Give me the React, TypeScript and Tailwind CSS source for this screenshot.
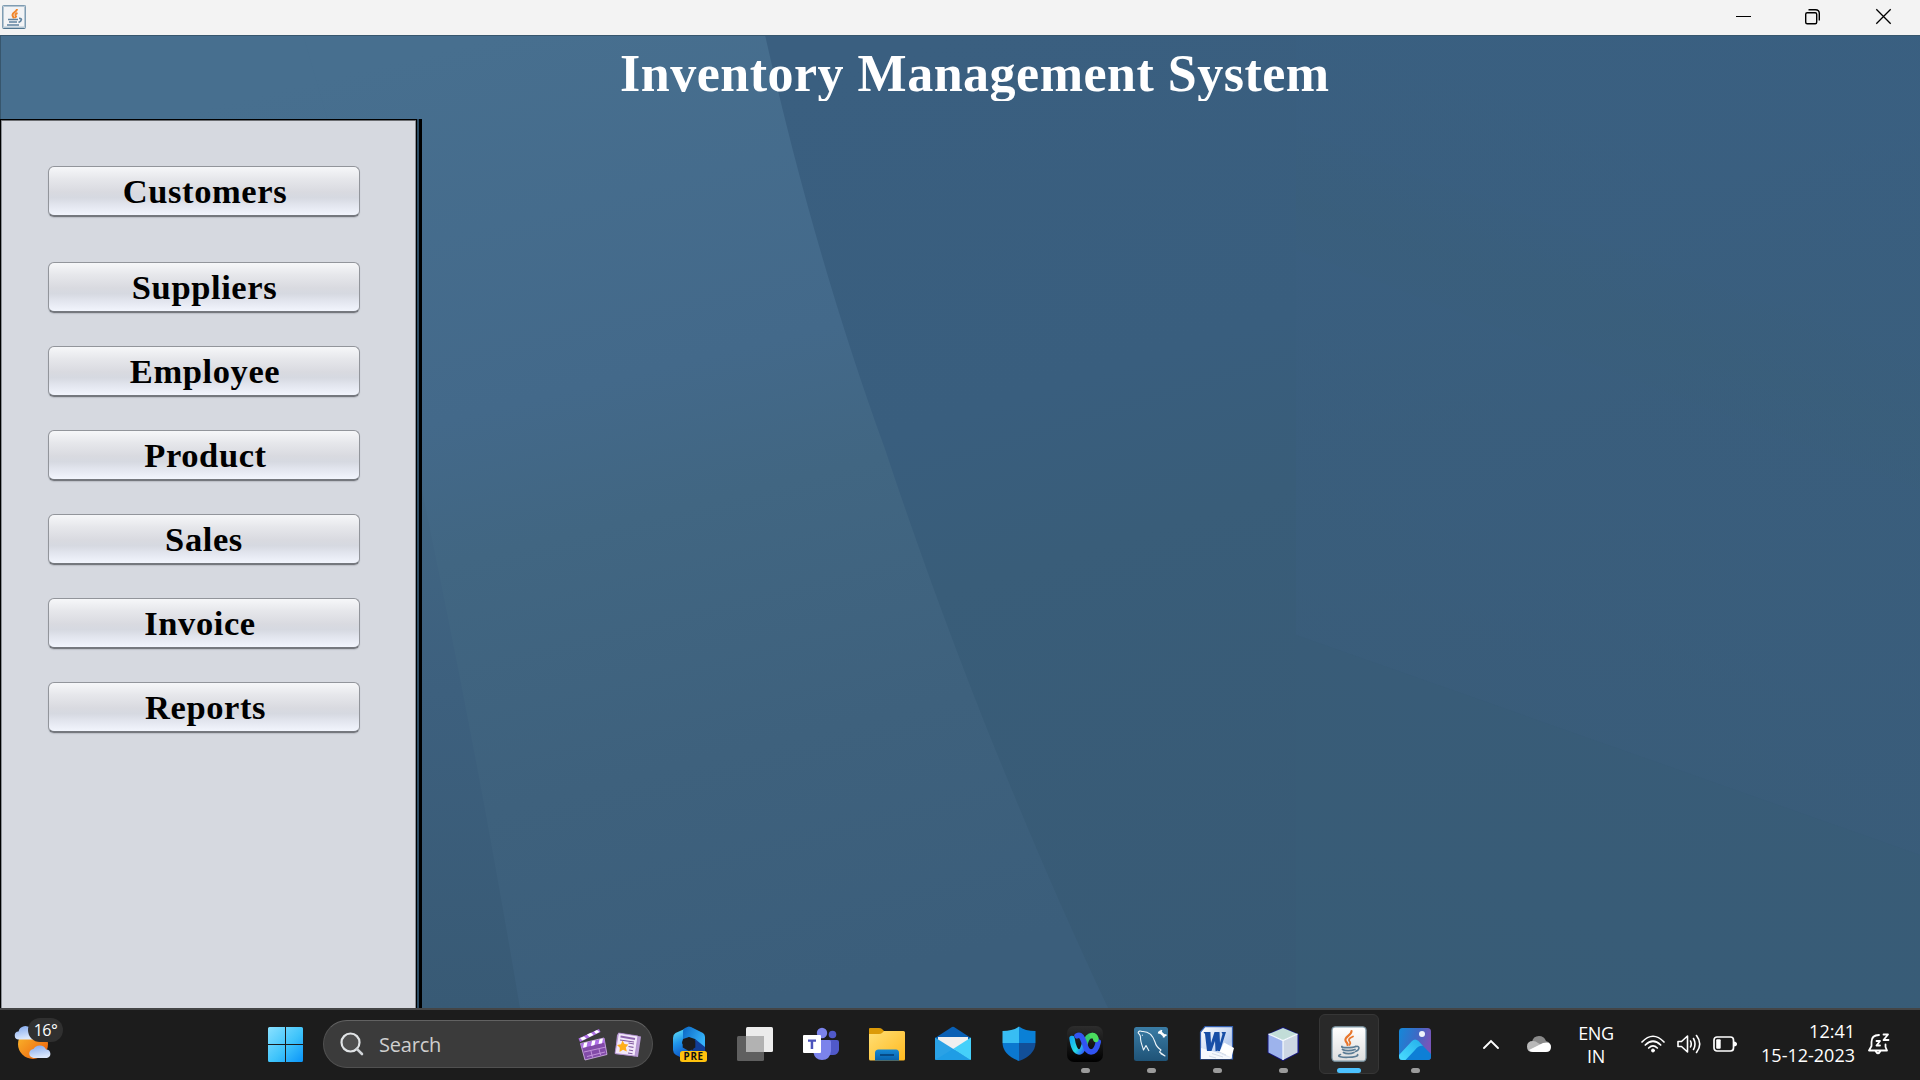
import React from "react";

const menu = [
  { label: "Customers", cls: "mb-[45px]", text: "pl-[2px]" },
  { label: "Suppliers", cls: "mb-[33px]", text: "pl-[1px]" },
  { label: "Employee", cls: "mb-[33px]", text: "pl-[2px]" },
  { label: "Product", cls: "mb-[33px]", text: "pl-[3px]" },
  { label: "Sales", cls: "mb-[33px]", text: "" },
  { label: "Invoice", cls: "mb-[33px]", text: "pr-[8px]" },
  { label: "Reports", cls: "", text: "pl-[3px]" },
];

function Backdrop() {
  return (
    <svg className="absolute inset-0 h-full w-full" viewBox="0 35 1920 973" preserveAspectRatio="none">
      <defs>
        <linearGradient id="dark" gradientUnits="userSpaceOnUse" x1="950" y1="35" x2="1250" y2="1008">
          <stop offset="0" stopColor="#3a5f80" />
          <stop offset="0.36" stopColor="#395e7e" />
          <stop offset="0.52" stopColor="#395d79" />
          <stop offset="1" stopColor="#385a75" />
        </linearGradient>
        <linearGradient id="light" gradientUnits="userSpaceOnUse" x1="500" y1="35" x2="740" y2="1008">
          <stop offset="0" stopColor="#476f8f" />
          <stop offset="0.36" stopColor="#43698a" />
          <stop offset="0.5" stopColor="#416682" />
          <stop offset="0.75" stopColor="#3e617d" />
          <stop offset="1" stopColor="#3b5e7b" />
        </linearGradient>
        <linearGradient id="corner" x1="0" y1="0" x2="0" y2="1">
          <stop offset="0" stopColor="#416683" />
          <stop offset="0.4" stopColor="#3d607e" />
          <stop offset="1" stopColor="#385a75" />
        </linearGradient>
        <linearGradient id="right" gradientUnits="userSpaceOnUse" x1="1740" y1="35" x2="1400" y2="1008">
          <stop offset="0" stopColor="#3a6082" />
          <stop offset="0.55" stopColor="#3a5e7e" />
          <stop offset="0.75" stopColor="#3a5d7b" />
          <stop offset="1" stopColor="#395d78" />
        </linearGradient>
        <linearGradient id="band" gradientUnits="userSpaceOnUse" x1="1620" y1="230" x2="1560" y2="390">
          <stop offset="0" stopColor="#3a5f7a" stopOpacity="0" />
          <stop offset="0.5" stopColor="#3a5f7a" />
          <stop offset="1" stopColor="#3a5f7a" stopOpacity="0" />
        </linearGradient>
      </defs>
      <rect y="35" width="1920" height="973" fill="url(#dark)" />
      <path d="M1296 35H1920V1008H1296Z" fill="url(#right)" opacity="0.65" />
      <path d="M1296 130L1920 360V490L1296 250Z" fill="url(#band)" opacity="0.5" />
      <path d="M1296 635L1920 855V1008H1296Z" fill="#385b75" opacity="0.5" />
      <path d="M0 35H765C800 190 840 325 885 449C935 600 1010 800 1108 1008H0Z" fill="url(#light)" />
      <path d="M420 480C436 560 475 740 520 1008H400V480Z" fill="url(#corner)" />
      <path d="M0 35H303L327 119H0Z" fill="#4a7192" opacity="0.15" />
      <path d="M0 35.5H1920M0.5 35V119" stroke="#37566d" fill="none" />
    </svg>
  );
}

function JavaCup({ size }: { size: string }) {
  return (
    <svg className={size} viewBox="0 0 36 36">
      <defs>
        <linearGradient id="cupbg" x1="0" y1="0" x2="0" y2="1">
          <stop offset="0" stopColor="#ffffff" />
          <stop offset="1" stopColor="#dedede" />
        </linearGradient>
      </defs>
      <rect x="1" y="0.8" width="34" height="34.4" rx="3.5" fill="url(#cupbg)" stroke="#7f99a8" strokeWidth="1.3" />
      <g fill="none" strokeLinecap="round">
        <path d="M20.5 5C21 9 13.500 10.500 14.500 14.500C15 16.500 17 17 16.500 19" stroke="#e8762c" strokeWidth="2.2" />
        <path d="M22 10.500C17.500 12.500 17 14 19 16C19.800 17 19.200 18 18.500 18.800" stroke="#e8762c" strokeWidth="1.8" />
        <path d="M11 20.500C9 22 22 22 24.500 20.500M11.500 23.500C14 25 20 25 24 23.500M12.500 26.500C15 28 20 28 23 26.500" stroke="#5b7c95" strokeWidth="1.7" />
        <path d="M25 20.500C29 19.500 29 24 24.500 25.500" stroke="#5b7c95" strokeWidth="1.6" />
        <path d="M9.500 28.500C4 30.500 12 31.500 17 31.300C23 31.200 28 30 26.500 28.500" stroke="#5b7c95" strokeWidth="1.6" />
      </g>
    </svg>
  );
}

function TitleBar() {
  return (
    <header className="flex h-[35px] shrink-0 items-start justify-between bg-[#f3f3f3]">
      <div className="ml-[2px] mt-[5px] h-6 w-6 overflow-hidden rounded-[2px] border border-[#7f9cb2] border-b-[#4f7590]">
        <svg className="h-[22px] w-[22px]" viewBox="0 0 22 22">
          <rect width="22" height="22" fill="#b4c6d3" />
          <rect x="1" y="1" width="20" height="19.500" fill="#f2f3f5" />
          <path d="M14 3C14 6 9.500 6 9.500 9C9.500 10.500 11 11 10.500 12.500M14.500 7C12 8 12 9 13 10.500L12 12" fill="none" stroke="#f0862b" strokeWidth="2" />
          <path d="M5 13.500H15M6 16H14M4 19H16M16 12.500C19.500 12 19 15 15.500 16.500" fill="none" stroke="#5f83a0" strokeWidth="1.700" />
        </svg>
      </div>
      <svg className="mr-[28px] mt-2 h-[17px] w-[158px]" viewBox="0 0 158 17" fill="none" stroke="#000">
        <path d="M2 8.500H17" strokeWidth="1" />
        <rect x="71.700" y="4.700" width="11" height="11" rx="1.500" strokeWidth="1.400" />
        <path d="M74.500 1.700H81.500Q85.300 1.700 85.300 5.500V12.500" strokeWidth="1.400" />
        <path d="M142.300 1.300L156.700 15.700M156.700 1.300L142.300 15.700" strokeWidth="1.300" />
      </svg>
    </header>
  );
}

function Sidebar() {
  return (
    <div className="flex h-full w-[422px]">
      <nav className="flex h-full w-[417px] flex-col items-start border-x border-t border-black bg-[#d6d9e0] pl-[47px] pt-[46px] shadow-[inset_0_1px_0_#6c6e72,inset_-1px_0_0_#8b8f96,inset_1px_0_0_#8b8f96]">
        {menu.map((m) => (
          <button
            key={m.label}
            className={`${m.cls} flex h-[51px] w-[312px] shrink-0 items-center justify-center rounded-[6px] border border-b-2 border-[#92959b] border-b-[#75787e] bg-[linear-gradient(to_bottom,#f6f7f9_0%,#e6e7eb_25%,#d9dae0_52%,#d6d9e1_64%,#e3e6ef_80%,#f2f5fd_100%)] font-['Liberation_Serif',serif] text-[34.500px] font-bold leading-[46px] tracking-[0.6px] text-black shadow-[0_1px_1px_rgba(110,114,122,0.25)]`}
          >
            <span className={m.text}>{m.label}</span>
          </button>
        ))}
      </nav>
      <div className="w-[2px] bg-[#2c4c64]" />
      <div className="w-[3px] bg-black" />
    </div>
  );
}

const ic = "h-9 w-9";

function Copilot() {
  return (
    <svg className={ic} viewBox="0 0 36 36">
      <defs>
        <linearGradient id="cp1" x1="0" y1="0" x2="0.300" y2="1">
          <stop offset="0" stopColor="#6ff0fb" /><stop offset="0.5" stopColor="#2196ea" /><stop offset="1" stopColor="#0b4fc0" />
        </linearGradient>
        <linearGradient id="cp2" x1="0" y1="0" x2="1" y2="0.500">
          <stop offset="0" stopColor="#0a66c4" /><stop offset="1" stopColor="#35b4fb" />
        </linearGradient>
      </defs>
      <path d="M18 1L4.500 7Q2 8.500 2 12V24Q2 27 5 29L15 34L22 30V24L14 22L11 17L13 9Z" fill="url(#cp1)" />
      <path d="M12 13V5Q12 3 14 2L17 0.700Q18 0.300 20 1L32 7Q34 8.500 34 11V24L29 20L24 13L18 11Z" fill="url(#cp2)" />
      <path d="M24 13L34 21V26L20 33L13 31L22 24Z" fill="#123e96" />
      <path d="M18 11.500L24.300 15V21.500L18 25L11.700 21.500V15Z" fill="#1c1c1c" />
      <rect x="9" y="25" width="27" height="11" rx="2.500" fill="#ffc20e" />
      <text x="22.700" y="33.800" textAnchor="middle" fontFamily="Open Sans, sans-serif" fontWeight="700" fontSize="9.800" letterSpacing="0.700" fill="#111">PRE</text>
    </svg>
  );
}

function TaskView() {
  return (
    <svg className={ic} viewBox="0 0 36 36">
      <rect x="9" y="1" width="27" height="25" rx="1.500" fill="#ececec" />
      <rect x="0" y="10" width="27" height="25" rx="1.500" fill="#5f5f5f" />
      <path d="M9 10H27V26H9Z" fill="#b2b2b2" />
    </svg>
  );
}

function Teams() {
  return (
    <svg className={ic} viewBox="0 0 36 36">
      <circle cx="29.500" cy="8.500" r="3.800" fill="#5059c9" />
      <path d="M24 14H34Q36 14 36 16V24Q35 29 30 29H24Z" fill="#5059c9" />
      <circle cx="19" cy="7" r="5.200" fill="#7b83eb" />
      <path d="M10 14H26Q28 14 28 16V25Q27 34 19 34Q12 34 10.500 27Z" fill="#7b83eb" />
      <rect x="0" y="9" width="18" height="18" rx="1" fill="#fff" />
      <path d="M5 13.500H13V15.800H10.200V23H7.700V15.800H5Z" fill="#4b53bc" />
    </svg>
  );
}

function Folder() {
  return (
    <svg className={ic} viewBox="0 0 36 36">
      <defs>
        <linearGradient id="fo" x1="0" y1="0" x2="1" y2="1"><stop offset="0" stopColor="#ffdf75" /><stop offset="1" stopColor="#ffb91f" /></linearGradient>
        <linearGradient id="fb" x1="0" y1="0" x2="0" y2="1"><stop offset="0" stopColor="#1688d4" /><stop offset="1" stopColor="#0862ad" /></linearGradient>
      </defs>
      <path d="M0 9V3Q0 2 1 2H10Q12 2 13 3L16 6V10H0Z" fill="#dc9a08" />
      <path d="M0 8H10Q12 8 13 7L15 5H34.500Q36 5 36 6.500V33Q36 34.500 34.500 34.500H1.500Q0 34.500 0 33Z" fill="url(#fo)" />
      <path d="M6 34.500V27Q6 23.500 9.500 23.500H27Q30 23.500 30 27V34.500Z" fill="url(#fb)" />
      <path d="M11 29H25" stroke="#064a86" strokeWidth="2" />
    </svg>
  );
}

function Mail() {
  return (
    <svg className={ic} viewBox="0 0 36 36">
      <path d="M0 12L17 1Q18 0.400 19 1L36 12V20H0Z" fill="#0960b5" />
      <path d="M3 11H33V15L18 26L3 15Z" fill="#f0f0f0" />
      <path d="M0 11.500L36 34H1Q0 34 0 33Z" fill="#2aa2e6" />
      <path d="M36 11.500V33Q36 34 35 34L18 23Z" fill="#45d0fa" />
      <path d="M0 34L18 23L35.500 34Z" fill="#1f9de5" />
    </svg>
  );
}

function Shield() {
  return (
    <svg className={ic} viewBox="0 0 36 36">
      <path d="M18 0.500Q12 5 1.500 5V17H18Z" fill="#38bdf3" />
      <path d="M18 0.500Q24 5 34.500 5V17H18Z" fill="#0a80d6" />
      <path d="M1.500 17Q2 29 18 35V17Z" fill="#0b78d0" />
      <path d="M34.500 17Q34 29 18 35V17Z" fill="#124f98" />
    </svg>
  );
}

function Webex() {
  return (
    <svg className={ic} viewBox="0 0 36 36">
      <defs>
        <linearGradient id="wbg" x1="0" y1="0" x2="0" y2="1"><stop offset="0" stopColor="#2d2d2d" /><stop offset="1" stopColor="#000" /></linearGradient>
        <linearGradient id="w1" gradientUnits="userSpaceOnUse" x1="4" y1="10" x2="20" y2="20"><stop offset="0" stopColor="#12a6f3" /><stop offset="0.600" stopColor="#25dde5" /><stop offset="1" stopColor="#2d65f6" /></linearGradient>
      </defs>
      <rect width="36" height="36" rx="7" fill="url(#wbg)" />
      <g fill="none" strokeLinecap="round" strokeWidth="5.400">
        <path d="M5 12.500C6 20 8.500 26 12 26C15.500 26 16.500 21 18 16" stroke="url(#w1)" />
        <path d="M18 18C19.500 12 22 9.500 25 9.500C27.500 9.500 28.500 11 29 13" stroke="#34c96b" />
        <path d="M10 9.800C13.500 7.800 15.500 11 17.500 17.500C19 23 21 26 24 26C28.500 26 30.500 20 31.300 16" stroke="#3154f2" />
        <path d="M25 9.500C27 9 28.500 11 28.800 13.500" stroke="#4bdc5e" />
      </g>
    </svg>
  );
}

function MySql() {
  return (
    <svg className={ic} viewBox="0 0 36 36">
      <defs><linearGradient id="my" x1="0" y1="0" x2="0" y2="1"><stop offset="0" stopColor="#3a7ca5" /><stop offset="1" stopColor="#1f5377" /></linearGradient></defs>
      <rect x="1" y="1" width="34" height="34" rx="2.500" fill="url(#my)" />
      <path d="M5 7Q6 4 9 5.500C16 5 20 10 22 16C23 20 25 22 28 24L26.500 26L32 30L27.500 27.500M5 7Q8 9 7.500 13C8 18 9.500 20 10.500 24L13 19.500L16 25M9 9L9.800 9.500" fill="none" stroke="#eef5f9" strokeWidth="1.100" strokeLinejoin="round" />
      <path d="M27 6L31 9.500" stroke="#fff" strokeWidth="2.600" strokeLinecap="round" />
      <path d="M25 6.500L27.500 7L28.500 4M30.500 11.500L31 9.500L33.500 9" stroke="#fff" strokeWidth="1.800" fill="none" />
    </svg>
  );
}

function Word() {
  return (
    <svg className={ic} viewBox="0 0 36 36">
      <defs><linearGradient id="wd" x1="0" y1="0" x2="1" y2="1"><stop offset="0" stopColor="#fff" /><stop offset="0.700" stopColor="#b9cdef" /><stop offset="1" stopColor="#fff" /></linearGradient></defs>
      <path d="M6 0.700H33.500V33H1.500V6Z" fill="url(#wd)" stroke="#345fae" strokeWidth="1.200" />
      <path d="M2 22L20 27L33 33H2Z" fill="#f5f8fd" />
      <path d="M4.500 6H11.500V8L12 17L15.500 6H20.500L21 17L23.500 8L22.500 6H27L21 25H16.500L16 15L12.500 25H8L6 8Z" fill="#174ea6" />
      <path d="M25 16.500L35 22L32.500 31L20 27Z" fill="#fff" />
      <path d="M18 25L27 29M13 27.500L24 31M10 30L17 32" stroke="#d2dbe8" strokeWidth="1" />
    </svg>
  );
}

function NetBeans() {
  return (
    <svg className={ic} viewBox="0 0 36 36">
      <path d="M18 2.500L32.500 9V26L18 33.500L4 26V9Z" stroke="#15167b" strokeWidth="3" strokeLinejoin="round" fill="#15167b" />
      <path d="M18 2L32.500 8L18 14.500L3.500 8Z" fill="#c2ddd8" />
      <path d="M3.500 8L18 14.500V34L3.500 26.500Z" fill="#9db3ec" />
      <path d="M32.500 8L18 14.500V34L32.500 26.500Z" fill="#ccd6e4" />
      <path d="M3.500 8L18 14.500L32.500 8M18 14.500V34" stroke="#f6fbff" fill="none" strokeWidth="1.200" />
    </svg>
  );
}

function Photos() {
  return (
    <svg className={ic} viewBox="0 0 36 36">
      <defs>
        <linearGradient id="ph" x1="0" y1="0" x2="1" y2="0.300"><stop offset="0" stopColor="#1389d9" /><stop offset="0.550" stopColor="#3b6bc6" /><stop offset="1" stopColor="#7855b9" /></linearGradient>
        <linearGradient id="pm" x1="0" y1="1" x2="1" y2="0"><stop offset="0" stopColor="#4bdcff" /><stop offset="1" stopColor="#23aeea" /></linearGradient>
      </defs>
      <rect x="2" y="2" width="32" height="32" rx="3.500" fill="url(#ph)" />
      <path d="M3 32L15 15.500Q18 12 21.500 15.500L34 28V31Q34 34 30.500 34H5Q3.500 34 3 32Z" fill="#0e7fd6" />
      <path d="M2 29L15 15Q18 12 21.500 15L26 20Q22 19 18 24L8.500 34H5.500Q2 34 2 30.500Z" fill="url(#pm)" />
      <circle cx="25" cy="8" r="3" fill="#eff3fb" />
    </svg>
  );
}

const apps = [
  { id: "copilot", icon: <Copilot />, state: "none" },
  { id: "taskview", icon: <TaskView />, state: "none" },
  { id: "teams", icon: <Teams />, state: "none" },
  { id: "folder", icon: <Folder />, state: "none" },
  { id: "mail", icon: <Mail />, state: "none" },
  { id: "shield", icon: <Shield />, state: "none" },
  { id: "webex", icon: <Webex />, state: "open" },
  { id: "mysql", icon: <MySql />, state: "open" },
  { id: "word", icon: <Word />, state: "open" },
  { id: "netbeans", icon: <NetBeans />, state: "open" },
  { id: "java", icon: <JavaCup size={ic} />, state: "active" },
  { id: "photos", icon: <Photos />, state: "open" },
];

function Weather() {
  return (
    <div className="relative ml-[14px] mt-[8px] h-[50px] w-[50px]">
      <svg className="h-full w-full" viewBox="0 0 50 50">
        <defs>
          <linearGradient id="sun" x1="0" y1="0.200" x2="0.800" y2="1"><stop offset="0" stopColor="#f9b52b" /><stop offset="1" stopColor="#ee650f" /></linearGradient>
          <linearGradient id="cl" x1="0" y1="0" x2="0.300" y2="1"><stop offset="0" stopColor="#7fa6ec" /><stop offset="1" stopColor="#dbe8fd" /></linearGradient>
        </defs>
        <circle cx="19" cy="26" r="15" fill="url(#sun)" />
        <path d="M5 21.500A4 4 0 0 1 4.500 13.500A7 7 0 0 1 17 11L20 21.500Z" fill="url(#cl)" />
        <path d="M20 40A4.500 4.500 0 0 1 19.500 31A7 7 0 0 1 32 31.500A4.300 4.300 0 0 1 33 40Z" fill="url(#cl)" />
      </svg>
      <span className="absolute left-[14px] top-0 flex h-6 w-[35px] items-center justify-center rounded-full bg-[#303030] font-['Open_Sans',sans-serif] text-[16px] leading-6 tracking-[-0.5px] text-white">16°</span>
    </div>
  );
}

function SearchBox() {
  return (
    <div className="mt-[10px] flex h-12 w-[330px] items-center rounded-full border border-[#505050] border-t-[#626262] bg-[#3b3b3b] pl-[16px] pr-[11px]">
      <svg className="h-6 w-6" viewBox="0 0 24 24" fill="none">
        <circle cx="10.500" cy="10.500" r="9" fill="#4f4f4f" stroke="#e1e4e6" strokeWidth="2.200" />
        <path d="M16.800 16.800L22 22" stroke="#d0d4d7" strokeWidth="2.600" strokeLinecap="round" />
      </svg>
      <span className="ml-[15px] mt-px font-['Open_Sans',sans-serif] text-[20px] tracking-[-0.2px] text-[#cfcfcf]">Search</span>
      <svg className="ml-auto h-[34px] w-16" viewBox="0 0 64 34">
        <g>
          <path d="M1.500 11.500L22 2L23.500 5L3 15Z" fill="#b070e8" />
          <path d="M3 11L7 9.500L9.500 11.500L5.500 13.500ZM10 7.500L14 5.700L16.500 8L12.500 10ZM17 4.500L20 3L22.500 5L19 6.800Z" fill="#fff" />
          <path d="M3.500 16.500L27 11L30 27.500L8 33Z" fill="#824ba8" stroke="#d8b8ee" strokeWidth="0.800" />
          <path d="M4 17L27 11.500L28 15.500L5 21Z" fill="#b070e8" />
          <path d="M7 16L10.500 15L9.500 20L6 20.800ZM15 14L18.500 13.200L17.500 18L14 19ZM22.500 12.200L26 11.400L25 16.200L21.500 17Z" fill="#fff" />
          <path d="M7 25L29 20M14 24L15.500 30.500M22 22L23.500 28M10 29.500L28 25" stroke="#c79bdf" strokeWidth="0.900" />
        </g>
        <path d="M42 6L64 9.500L61 30L55 29L38 27L40 8Z" fill="#b89bd4" />
        <path d="M41.500 6L61 9L58 29L38 26.500Z" fill="#f2e8fa" stroke="#a986c9" strokeWidth="0.800" />
        <path d="M43.500 9.500L58 12" stroke="#8d64ae" strokeWidth="2" />
        <path d="M51.500 16L57 17M51.500 19.500L56.500 20.400M52 23L56 23.700M51 26L55.500 26.700M43 13L57 15" stroke="#805aa0" strokeWidth="1.100" />
        <path d="M45.500 13.500L47.500 17L51.300 17.600L48.800 20.500L49.800 24.500L46 22.800L42.500 25L42.800 20.800L40 18L44 17.300Z" fill="#ffae1a" />
      </svg>
    </div>
  );
}

function Tray() {
  return (
    <div className="flex h-[68px] items-center font-['Open_Sans',sans-serif] text-[18px] text-white">
      <svg className="h-3 w-[18px]" viewBox="0 0 18 12"><path d="M2 10L9 3L16 10" fill="none" stroke="#fff" strokeWidth="1.900" strokeLinecap="round" /></svg>
      <svg className="ml-[27px] h-[18px] w-[24px]" viewBox="0 0 24 18">
        <path d="M5 7Q6 1 12 1Q17 1 19 6Q23 7 23 10L8 16Z" fill="#8a8a8a" />
        <path d="M5.500 17Q0 17 0 11.500Q0 6 6 6Q9 6 11 8L17 11L12 17Z" fill="#b9b9b9" />
        <path d="M2 15L16 8Q24 6 24 12Q24 17 19 17H6Q3.500 17 2 15Z" fill="#fff" />
      </svg>
      <div className="ml-[26px] mt-px w-[38px] text-center leading-[23px] tracking-[-0.300px]">
        <div>ENG</div>
        <div>IN</div>
      </div>
      <svg className="ml-[26px] h-[18px] w-6" viewBox="0 0 24 18" fill="none" stroke="#fff" strokeWidth="1.700" strokeLinecap="round">
        <path d="M1 7Q12 -4.500 23 7M4.300 10Q12 2.500 19.700 10M7.700 13Q12 8.800 16.300 13" />
        <circle cx="12" cy="15.500" r="1.500" fill="#fff" stroke="#fff" strokeWidth="1" />
      </svg>
      <svg className="ml-3 h-5 w-6" viewBox="0 0 24 20" fill="none" stroke="#fff" strokeWidth="1.600" strokeLinejoin="round" strokeLinecap="round">
        <path d="M1 7.500H4.500L10.500 2V18L4.500 12.500H1Z" />
        <path d="M13.500 7Q15 10 13.500 13M16.500 4.500Q19.500 10 16.500 15.500M19.500 1.500Q26 10 19.500 18.500" />
      </svg>
      <svg className="ml-3 h-[18px] w-6" viewBox="0 0 24 18">
        <rect x="1" y="2" width="19.500" height="14" rx="3" fill="none" stroke="#fff" strokeWidth="1.700" />
        <rect x="3.200" y="4.200" width="4.500" height="9.600" rx="1" fill="#fff" />
        <path d="M21 6.500Q24 7 24 9Q24 11 21 11.500Z" fill="#fff" />
      </svg>
      <div className="-mt-[2px] ml-[22px] w-[96px] whitespace-nowrap text-right leading-[24px]">
        <div>12:41</div>
        <div>15-12-2023</div>
      </div>
      <svg className="ml-[13px] mr-[30px] h-[22px] w-[22px]" viewBox="0 0 22 22" fill="none" stroke="#fff" strokeWidth="1.800" strokeLinecap="round" strokeLinejoin="round">
        <path d="M11 2Q3.500 2 3.500 9V13L1 17.500H19L17.500 14V11.500M7.500 18Q10 22.500 12.500 18" />
        <path d="M8.500 8H12L8.500 12.500H12M15.500 1.500H20L15.500 7H20.500" />
      </svg>
    </div>
  );
}

function Taskbar() {
  return (
    <footer className="flex h-[72px] shrink-0 items-start border-t-2 border-[#444546] bg-[#1c1c1c]">
      <Weather />
      <svg className="ml-[204px] mr-5 mt-[17px] h-[35px] w-[35px]" viewBox="0 0 35 35">
        <defs><linearGradient id="win" gradientUnits="userSpaceOnUse" x1="0" y1="0" x2="35" y2="35"><stop offset="0" stopColor="#8ae1ff" /><stop offset="0.550" stopColor="#3fc4fb" /><stop offset="1" stopColor="#0a94f8" /></linearGradient></defs>
        <path d="M1.500 0H17V17H0V1.500Q0 0 1.500 0ZM18 0H33.500Q35 0 35 1.500V17H18ZM0 18H17V35H1.500Q0 35 0 33.500ZM18 18H35V33.500Q35 35 33.500 35H18Z" fill="url(#win)" />
      </svg>
      <SearchBox />
      <div className="ml-[3px] flex">
        {apps.map((a) => (
          <div key={a.id} className="flex h-[70px] w-[66px] justify-center pt-1">
            <div
              className={
                a.state === "active"
                  ? "flex h-[60px] w-[60px] flex-col items-center rounded-[6px] border border-[#363636] bg-[#292929] pt-[11px]"
                  : "flex h-[60px] w-[60px] flex-col items-center pt-[12px]"
              }
            >
              {a.icon}
              {a.state === "open" && <div className="mt-[6px] h-[5px] w-[9px] rounded-full bg-[#9b9b9b]" />}
              {a.state === "active" && <div className="mt-[6px] h-[5px] w-6 rounded-full bg-[#4cc2ff]" />}
            </div>
          </div>
        ))}
      </div>
      <div className="ml-auto">
        <Tray />
      </div>
    </footer>
  );
}

export default function App() {
  return (
    <div className="flex h-[1080px] w-[1920px] flex-col overflow-hidden bg-[#395d79]">
      <TitleBar />
      <main className="relative h-[973px] shrink-0 overflow-hidden">
        <Backdrop />
        <div className="relative flex h-full flex-col">
          <div className="h-[84px] shrink-0">
            <h1 className="ml-[620px] h-[66px] w-[720px] overflow-hidden whitespace-nowrap font-['Liberation_Serif',serif] text-[52px] font-bold leading-[77px] tracking-[0.5px] text-white">
              Inventory Management System
            </h1>
          </div>
          <div className="min-h-0 flex-1">
            <Sidebar />
          </div>
        </div>
      </main>
      <Taskbar />
    </div>
  );
}
